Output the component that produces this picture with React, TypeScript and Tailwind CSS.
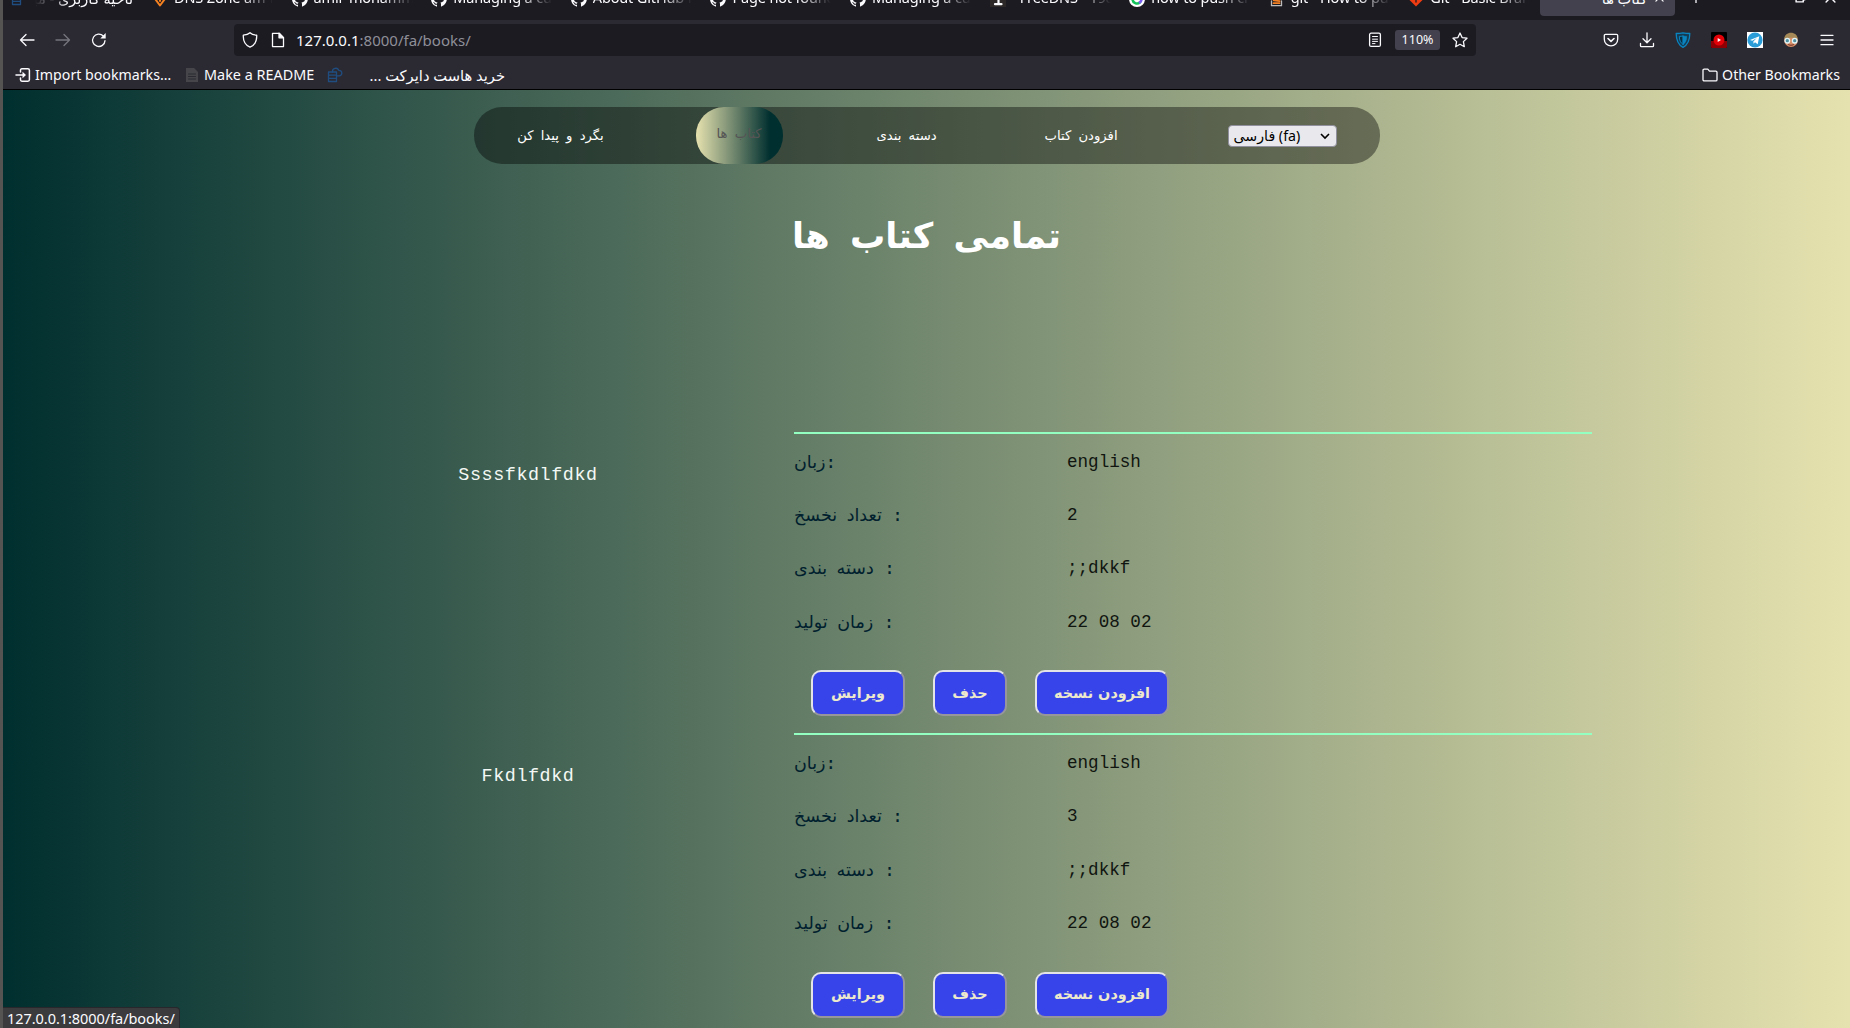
import type { ReactNode } from "react";

/* ---------- icons ---------- */

const stroke = {
  fill: "none",
  stroke: "currentColor",
  strokeWidth: 1.3,
  strokeLinecap: "round" as const,
  strokeLinejoin: "round" as const,
};

function Svg({ className = "size-4", box = 16, children }: { className?: string; box?: number; children: ReactNode }) {
  return (
    <svg className={`shrink-0 ${className}`} viewBox={`0 0 ${box} ${box}`} {...stroke}>
      {children}
    </svg>
  );
}

const ArrowLeft = () => <Svg><path d="M15 8H1.5M7 2.5 1.5 8 7 13.5" /></Svg>;
const ArrowRight = () => <Svg><path d="M1 8h13.5M9 2.5 14.500 8 9 13.500" /></Svg>;
const Reload = () => (
  <Svg>
    <path d="M14 8.600A6.200 6.200 0 1 1 12.300 4" />
    <path d="M14.700 1v5.400H9.300z" fill="currentColor" stroke="none" />
  </Svg>
);
const Shield = () => <Svg><path d="M8 .8C6.500 2.200 4 3 1.300 3.200c-.3 5.500 1.700 10 6.700 12 5-2 7-6.500 6.700-12C12 3 9.500 2.200 8 .8z" /></Svg>;
const Page = () => <Svg><path d="M2.500 1.300h6.700l4.300 4.300v9H2.500z" /><path d="M9 1.300v4.500h4.500z" fill="currentColor" /></Svg>;
const Reader = () => (
  <Svg>
    <rect x="2.600" y="1.200" width="10.800" height="13.200" rx="1.500" />
    <path d="M5.500 4.500h5M5.500 7.200h5M5.500 9.400h5M5.500 11.600h2.500" strokeWidth="1" />
  </Svg>
);
const Star = () => <Svg><path d="m8 1 2.100 4.600 4.900.6-3.600 3.400.9 5.100L8 12.300l-4.300 2.400.9-5.100L1 6.200l4.900-.6z" /></Svg>;
const Pocket = () => (
  <Svg>
    <path d="M2.500 2.300h11c.7 0 1.200.5 1.200 1.200v3.700a6.700 6.700 0 0 1-13.400 0V3.500c0-.7.500-1.200 1.200-1.200z" />
    <path d="m5 6.500 3 2.900 3-2.900" strokeWidth="1.600" />
  </Svg>
);
const Download = () => <Svg><path d="M8 .8v9.700M4 6.800l4 4 4-4M1.500 11.500v2.200c0 .5.4.9.9.9h11.200c.5 0 .9-.4.9-.9v-2.200" /></Svg>;
const BlueShield = () => (
  <Svg>
    <path d="M8 .8C6 1.300 4 1.500 1.200 1.500c0 6 1.300 11 6.800 13.800 5.500-2.800 6.800-7.800 6.800-13.800C12 1.500 10 1.300 8 .8z" stroke="#0a84c0" fill="#153a52" />
    <path d="M8 4c-1.300.3-2.400.4-3.700.4.100 3.700 1 6.400 3.700 8.100z" fill="#0a2c40" stroke="#0a84c0" strokeWidth="1" />
    <path d="M8 4c1.300.3 2.400.4 3.700.4-.1 3.700-1 6.400-3.700 8.100z" fill="#0a84c0" stroke="#0a84c0" strokeWidth=".6" />
  </Svg>
);
const RedPlay = () => (
  <Svg>
    <rect width="16" height="16" rx="1" fill="#000" stroke="none" />
    <path d="M0 9h16v6q0 1-1 1H1q-1 0-1-1z" fill="#8f0004" stroke="none" />
    <circle cx="8" cy="8" r="5.500" fill="#e30208" stroke="none" />
    <path d="M6.700 6v4l3.300-2z" fill="#fff" stroke="none" />
  </Svg>
);
const Telegram = () => (
  <Svg>
    <rect width="16" height="16" fill="#fff" stroke="none" />
    <circle cx="8" cy="8" r="7.600" fill="#2a9dd8" stroke="none" />
    <path d="m3 8 9.300-3.800-1.600 8-2.700-1.900-1.400 1.400-.3-2.300 3.500-3.400-4.500 2.800z" fill="#fff" stroke="none" />
  </Svg>
);
const Face = () => (
  <Svg>
    <circle cx="8" cy="8.300" r="6.800" fill="#d8906a" stroke="none" />
    <path d="M1.300 7C1.500 3 4.500.8 8 .8S14.500 3 14.700 7c-3-2-9-1.500-13.400 0z" fill="#a58a58" stroke="none" />
    <path d="M5.500 12.500q2.500 1.500 5 0" stroke="#8a4a38" />
    <circle cx="4.300" cy="8.700" r="2.300" fill="#4f8fa0" stroke="#dff4f8" />
    <circle cx="11.700" cy="8.700" r="2.300" fill="#4f8fa0" stroke="#dff4f8" />
  </Svg>
);
const Menu = () => <Svg><path d="M2 3.300h12M2 8h12M2 12.700h12" /></Svg>;
const ImportIcon = () => (
  <Svg>
    <path d="M5.500 5V3.200c0-.8.500-1.400 1.400-1.400h6c.9 0 1.500.6 1.500 1.400v9.600c0 .8-.6 1.400-1.500 1.400h-6c-.9 0-1.400-.6-1.400-1.400V11" strokeWidth="1.500" />
    <path d="M1 8h8" strokeWidth="1.500" />
    <path d="M7.500 4.800 11 8l-3.500 3.200z" fill="currentColor" stroke="none" />
  </Svg>
);
const GreyPage = () => (
  <Svg>
    <path d="M2 1h8l4 4v10H2z" fill="#45454a" stroke="none" />
    <path d="M4.500 7h7M4.500 9.500h7M4.500 12h7" stroke="#2b2a33" strokeWidth="1" />
  </Svg>
);
const CloudServer = () => (
  <Svg>
    <path d="M1.500 5h8v9.500h-8zM1.500 8.200h8M1.500 11.400h8" stroke="#1f4d80" />
    <path d="M5.500 5a3.300 3.300 0 0 1 6.300-1.700A2.800 2.800 0 0 1 14.800 6a2.600 2.600 0 0 1-2.700 2.800H9.500" stroke="#1f4d80" />
  </Svg>
);
const Folder = () => <Svg><path d="M1 12.700V3.300c0-.7.500-1.200 1.200-1.200h3.600l1.700 2h6.300c.7 0 1.200.5 1.200 1.200v7.400c0 .7-.5 1.200-1.200 1.200H2.200c-.7 0-1.200-.5-1.200-1.200z" /></Svg>;

const GithubMark = () => (
  <Svg>
    <path fill="currentColor" stroke="none" d="M8 0a8 8 0 0 0-2.530 15.590c.4.070.55-.17.55-.38v-1.490C3.780 14.200 3.310 12.700 3.310 12.700c-.36-.93-.89-1.170-.89-1.170-.73-.5.050-.49.050-.49.800.060 1.230.83 1.230.83.710 1.220 1.870.87 2.330.66.070-.52.280-.87.510-1.070-1.780-.2-3.640-.89-3.640-3.950 0-.87.310-1.590.82-2.150-.08-.2-.36-1.020.08-2.120 0 0 .67-.21 2.200.82a7.600 7.600 0 0 1 4 0c1.530-1.040 2.200-.82 2.200-.82.440 1.100.16 1.920.08 2.120.51.560.82 1.270.82 2.150 0 3.070-1.870 3.750-3.650 3.950.29.250.54.730.54 1.480v2.200c0 .21.150.46.550.38A8 8 0 0 0 8 0z" />
  </Svg>
);
const PinMark = () => (
  <Svg><path d="M8 14.500 2.800 7.500a5.500 5.500 0 1 1 10.400 0z" stroke="#f58220" strokeWidth="2" /><path d="M8 5v5" stroke="#f58220" strokeWidth="2" /></Svg>
);
const OneMark = () => (
  <Svg><rect width="16" height="16" fill="#2c2827" stroke="none" /><path d="M6 4l2.500-1.500V13M5 13.200h6.500" strokeWidth="2.200" /></Svg>
);
const GreenMark = () => (
  <Svg>
    <circle cx="8" cy="8" r="8" fill="#fff" stroke="none" />
    <path d="M3.500 8a4.500 4.500 0 0 0 7.500 3.300" stroke="#14c35a" strokeWidth="2.600" />
    <path d="M11 11.300A4.500 4.500 0 0 0 12.500 8" stroke="#7a5cf0" strokeWidth="2.600" />
  </Svg>
);
const StackMark = () => (
  <Svg><path d="M2.500 10v4.700h10V10" stroke="#bcbbbb" /><path d="M4.500 12.200h6M4.700 9.300l6 .8" stroke="#f48024" strokeWidth="1.700" /></Svg>
);
const GitMark = () => (
  <Svg><path d="m8 .5 7.500 7.500L8 15.500.5 8z" fill="#f03c12" stroke="none" /><path d="M8 5v6" stroke="#1c1b22" /></Svg>
);

/* ---------- browser chrome ---------- */

const tabs: { icon: ReactNode; title: string }[] = [
  { icon: <PinMark />, title: "DNS Zone am-moh" },
  { icon: <GithubMark />, title: "amir-mohammad" },
  { icon: <GithubMark />, title: "Managing a custom" },
  { icon: <GithubMark />, title: "About GitHub Pages" },
  { icon: <GithubMark />, title: "Page not found" },
  { icon: <GithubMark />, title: "Managing a custom" },
  { icon: <OneMark />, title: "- FreeDNS - 1984" },
  { icon: <GreenMark />, title: "how to push change" },
  { icon: <StackMark />, title: "git - How to push" },
  { icon: <GitMark />, title: "Git - Basic Branching" },
];

const fadeRight = "[mask-image:linear-gradient(to_right,#000_68%,transparent)]";
const fadeLeft = "[mask-image:linear-gradient(to_left,#000_65%,transparent)]";

function TabStrip() {
  return (
    <div className="h-5 shrink-0 overflow-hidden bg-[#1c1b22]">
      <div className="-mt-[14px] flex h-[30px] items-start">
        <div className="flex h-6 w-[138px] shrink-0 items-center gap-2 pl-2">
          <CloudServer />
          <span dir="rtl" className={`w-[98px] overflow-hidden whitespace-nowrap text-[14.500px] leading-5 ${fadeLeft}`}>ناحیه کاربری - میزبان</span>
        </div>
        {tabs.map((tab, i) => (
          <div key={i} className="flex h-6 w-[139.600px] shrink-0 items-center gap-1.5 pt-0.5 pl-[11px]">
            {tab.icon}
            <span className={`-mt-1 w-[99px] overflow-hidden whitespace-nowrap text-[14.500px] leading-5 tracking-[-0.15px] ${fadeRight}`}>{tab.title}</span>
          </div>
        ))}
        <div className="ml-[3px] flex h-[30px] w-[135px] shrink-0 items-start justify-end gap-2 rounded-b bg-[#42414d] pr-[11px]">
          <span dir="rtl" className="text-[14.500px] leading-6">کتاب ها</span>
          <svg className="mt-[7px] size-[9px]" viewBox="0 0 10 10" {...stroke}><path d="m1 1 8 8M9 1 1 9" /></svg>
        </div>
        <svg className="mt-[5px] ml-[15px] size-3" viewBox="0 0 12 12" {...stroke}><path d="M6 0v12M0 6h12" /></svg>
        <svg className="mt-[6px] ml-[93px] size-[11px]" viewBox="0 0 10 10" {...stroke}><path d="M1 2.500h6.500V9H1zM3 1h6v6H7.500" /></svg>
        <svg className="mt-[6px] ml-[19px] size-[11px]" viewBox="0 0 10 10" {...stroke}><path d="m1 1 8 8M9 1 1 9" /></svg>
      </div>
    </div>
  );
}

function Toolbar() {
  return (
    <div className="flex h-10 shrink-0 items-center">
      <div className="flex w-[231px] items-center gap-5 pl-4">
        <ArrowLeft />
        <span className="flex text-[#76757e]"><ArrowRight /></span>
        <Reload />
      </div>
      <div className="flex h-8 w-[1242px] items-center rounded bg-[#1c1b22] pr-2 pl-2">
        <Shield />
        <span className="ml-3 flex"><Page /></span>
        <span className="ml-[10px] text-[15px] leading-5">
          127.0.0.1<span className="text-[#8f8f98]">:8000/fa/books/</span>
        </span>
        <span className="ml-auto flex"><Reader /></span>
        <span className="ml-3 grid h-5 w-[45px] place-items-center rounded-[3px] bg-[#42414d] text-[12.500px]">110%</span>
        <span className="ml-3 flex"><Star /></span>
      </div>
      <div className="ml-auto flex items-center gap-5 pr-[15px]">
        <Pocket />
        <Download />
        <BlueShield />
        <RedPlay />
        <Telegram />
        <Face />
        <Menu />
      </div>
    </div>
  );
}

function BookmarksBar() {
  return (
    <div className="flex h-[30px] shrink-0 items-center border-b border-black text-[14.200px] leading-5 whitespace-nowrap">
      <span className="ml-3 flex"><ImportIcon /></span>
      <span className="ml-1 w-[149px]">Import bookmarks…</span>
      <GreyPage />
      <span className="ml-1 w-[123px] text-[14.400px]">Make a README</span>
      <CloudServer />
      <span dir="rtl" className="ml-[26px] w-[136px] text-[14.700px]">خرید هاست دایرکت ...</span>
      <span className="ml-auto flex"><Folder /></span>
      <span className="mr-[10px] ml-1">Other Bookmarks</span>
    </div>
  );
}

/* ---------- page ---------- */

function NavBar() {
  return (
    <nav dir="ltr" className="mx-auto flex h-[57px] w-[906px] shrink-0 items-center rounded-[28px] bg-black/40 font-['DejaVu_Sans',sans-serif] text-[13.200px] whitespace-nowrap text-white [word-spacing:3px]">
      <a className="ml-[43px] w-[88px] text-center">بگرد و پیدا کن</a>
      <a className="ml-[91px] grid h-full w-[87px] place-items-center rounded-[28px] bg-[linear-gradient(to_left,#002f2f_15%,#e6e2af)] pb-1 text-[#555]">کتاب ها</a>
      <a className="ml-[94px] w-[58px] text-center">دسته بندی</a>
      <a className="ml-[110px] w-[72px] text-center">افزودن کتاب</a>
      <div className="ml-[111px] flex h-[22px] w-[109px] items-center justify-between rounded border border-[#8f8f9d] bg-[#e9e9ed] pr-1.5 pl-[5px] font-['Noto_Sans','DejaVu_Sans',sans-serif] text-[14.200px] leading-5 text-black [word-spacing:0]">
        <span dir="rtl">(fa) فارسی</span>
        <svg className="size-[10px]" viewBox="0 0 10 10" fill="none" stroke="currentColor" strokeWidth="1.600"><path d="m1 3 4 4 4-4" /></svg>
      </div>
    </nav>
  );
}

function PageButton({ children, width }: { children: ReactNode; width: string }) {
  return (
    <button className={`${width} h-[46px] rounded-[10px] border-2 border-t-[#e4e4e6] border-r-[#97979b] border-b-[#97979b] border-l-[#e4e4e6] bg-[#3644ea] font-['DejaVu_Sans',sans-serif] text-[14.400px] font-bold whitespace-nowrap text-[#ece9cc]`}>
      {children}
    </button>
  );
}

function Row({ label, gap, value }: { label: string; gap: boolean; value: string }) {
  return (
    <div className="flex h-[53.330px] items-center text-[17.600px] leading-5 whitespace-pre">
      <div className="w-[273px] font-['DejaVu_Sans',sans-serif] text-[17.500px] text-[#00202e] [word-spacing:4px]">
        <bdi>{label}</bdi>
        <span className="font-['DejaVu_Sans_Mono',monospace] [word-spacing:0]">{gap ? " :" : ":"}</span>
      </div>
      <div className="font-['Liberation_Mono',monospace] text-[#101510]">{value}</div>
    </div>
  );
}

function Book({ title, copies }: { title: string; copies: string }) {
  return (
    <section className="flex h-[301.300px] shrink-0">
      <div className="mt-8 mr-[166px] ml-[425px] w-[200px] text-center font-['Liberation_Mono',monospace] text-[18.400px] leading-6 tracking-[0.58px] text-[#f4f8f4]">
        {title}
      </div>
      <div className="w-[798px] border-t-2 border-[#93ffc1] pt-px">
        <Row label="زبان" gap={false} value="english" />
        <Row label="تعداد نخسخ" gap value={copies} />
        <Row label="دسته بندی" gap value=";;dkkf" />
        <Row label="زمان تولید" gap value="22 08 02" />
        <div className="mt-[22px] ml-[17px] flex">
          <PageButton width="w-[94px]">ویرایش</PageButton>
          <span className="mx-7 flex"><PageButton width="w-[74px]">حذف</PageButton></span>
          <PageButton width="w-[134px]">افزودن نسخه</PageButton>
        </div>
      </div>
    </section>
  );
}

export default function App() {
  return (
    <div className="relative flex h-[1028px] w-[1850px] flex-col overflow-hidden border-l-[3px] border-[#555452] bg-[#2b2a33] font-['Noto_Sans','DejaVu_Sans',sans-serif] text-[#fbfbfe]">
      <TabStrip />
      <Toolbar />
      <BookmarksBar />
      <main className="flex min-h-0 flex-1 flex-col overflow-hidden bg-[linear-gradient(to_right,#002f2f,#e6e2af)] pt-[17px]">
        <NavBar />
        <h1 dir="rtl" className="mx-auto mt-[46px] h-[52px] shrink-0 font-['DejaVu_Sans',sans-serif] text-[35.200px] leading-[52px] font-bold whitespace-nowrap text-white [word-spacing:8px]">
          تمامی کتاب ها
        </h1>
        <div className="mt-[170px] flex flex-col">
          <Book title="Ssssfkdlfdkd" copies="2" />
          <Book title="Fkdlfdkd" copies="3" />
        </div>
      </main>
      <div className="absolute bottom-0 left-0 h-[21px] w-[177px] rounded-tr border-t border-r border-[#28282c] bg-[#3b3b3e] pl-1 text-[14.500px] leading-5 tracking-[-0.05px] whitespace-nowrap">
        127.0.0.1:8000/fa/books/
      </div>
    </div>
  );
}
